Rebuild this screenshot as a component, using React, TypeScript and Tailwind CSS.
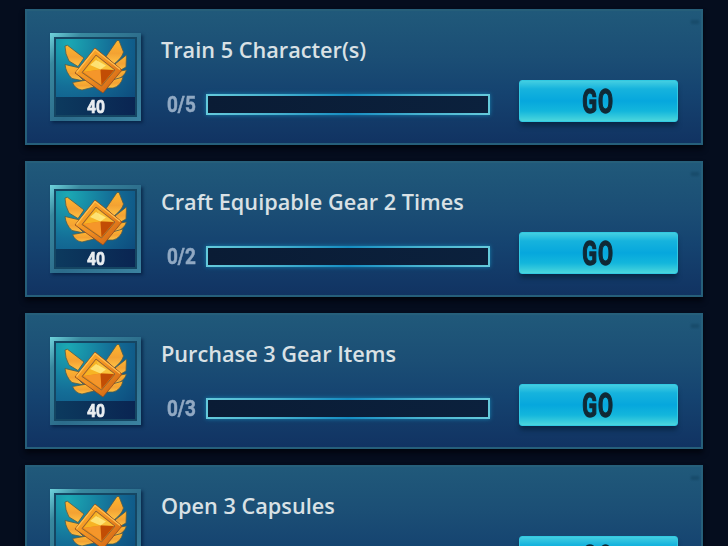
const QUESTS = [
  { title: 'Train 5 Character(s)', goal: 5, reward: 40 },
  { title: 'Craft Equipable Gear 2 Times', goal: 2, reward: 40 },
  { title: 'Purchase 3 Gear Items', goal: 3, reward: 40 },
  { title: 'Open 3 Capsules', goal: 3, reward: 40 },
];

type Quest = (typeof QUESTS)[number];

function Medal() {
  return (
    <svg viewBox="0 0 120 110" className="absolute left-0 top-0 h-[110px] w-[120px] -translate-x-[14px] -translate-y-[16px]">
      <defs>
        <linearGradient id="wing" x1="0" y1="0" x2="0" y2="1">
          <stop offset="0" stopColor="#ffb52e" />
          <stop offset="0.55" stopColor="#f3a233" />
          <stop offset="1" stopColor="#ffc345" />
        </linearGradient>
        <linearGradient id="frame" x1="0" y1="0" x2="1" y2="1">
          <stop offset="0" stopColor="#ffb32b" />
          <stop offset="0.5" stopColor="#f08f22" />
          <stop offset="1" stopColor="#c9580f" />
        </linearGradient>
      </defs>
      <g fill="url(#wing)" stroke="#4f5c4c" strokeWidth="0.8" strokeLinejoin="round">
        <path d="M25 26 L27.5 25.3 L44 38 L38 46.5 L29 41 Q25 34 25 26Z" />
        <path d="M25 44.5 L40 48 L36 53 L44 61 L32 58.5 Q26 53 25 44.5Z" />
        <path d="M32.5 62.5 L47 60 L54 67 L42 70 Q35 69 32.5 62.5Z" />
        <path d="M77 20.5 L79 20.5 L83.5 32 Q82 38 74 44 L66 36.5Z" />
        <path d="M86.5 35 L86 47 L79 51 L75 44Z" />
        <path d="M86.5 50 Q84.5 57 76 60 L73 57 L80 51Z" />
        <path d="M83 57 Q81 66 73 68 L65 68 L72 60Z" />
      </g>
      <path d="M55 28 L82 50 L63 73 L35 53Z" fill="url(#frame)" stroke="#8a4a22" strokeWidth="0.8" />
      <path d="M36.5 52.5 L55 29.5 L80 49.5" fill="none" stroke="#ffc050" strokeWidth="1.2" />
      <path d="M56 35 L75 50 L61.5 66 L42 52.5Z" fill="#e8860d" stroke="#8f6438" strokeWidth="1" />
      <path d="M56 36 L43.5 52 L60.5 49.5Z" fill="#f7b424" />
      <path d="M56 36 L74 50 L60.5 49.5Z" fill="#f9c23a" />
      <path d="M43.5 52 L60.5 49.5 L61.5 65Z" fill="#f5962a" />
      <path d="M60.5 49.5 L74 50 L61.5 65Z" fill="#c24d05" />
      <path d="M50 45 L56 40 L66 45.5 L60.5 49.5Z" fill="#fff08c" opacity="0.75" />
    </svg>
  );
}

function RewardTile({ amount }: { amount: number }) {
  return (
    <div className="h-[88px] w-[91px] shrink-0 bg-[linear-gradient(135deg,#6fd3dc_0%,#39899f_18%,#2c6c8b_55%,#3b83a0_100%)] p-1 shadow-[2px_2px_3px_rgba(4,28,60,0.7)]">
      <div className="relative flex h-full flex-col justify-end border-2 border-[#154663] bg-[radial-gradient(circle_at_15%_5%,#1ba9b4_0%,#146e97_45%,#0b4276_100%)]">
        <div className="flex h-[18px] items-center justify-center bg-[linear-gradient(90deg,#0c3a5e,#0a2552)]">
          <span className="relative z-10 block scale-x-[0.82] pt-px font-[Roboto,sans-serif] text-[19px] leading-none font-bold text-[#e9edf0] [-webkit-text-stroke:0.7px_#e9edf0]">
            {amount}
          </span>
        </div>
        <div className="absolute -top-[3px] -left-[2px]">
          <Medal />
        </div>
      </div>
    </div>
  );
}

function QuestCard({ quest }: { quest: Quest }) {
  return (
    <div className="relative flex h-[136px] shrink-0 items-start border-2 border-[#265f7a] bg-[linear-gradient(180deg,#20597a_0%,#1b4e75_35%,#154370_62%,#113362_100%)] pt-[22px] pl-[23px] shadow-[0_4px_5px_#02050e]">
      <span className="absolute top-[9px] right-[2px] h-1 w-2 bg-[#154765] opacity-70 blur-[1px]" />
      <RewardTile amount={quest.reward} />
      <div className="ml-[20px] w-[329px] shrink-0">
        <h2 className="mt-[3px] h-7 whitespace-nowrap font-['Open_Sans','Noto_Sans',sans-serif] text-[21.7px] leading-7 font-semibold text-[#d9e1e5]">
          {quest.title}
        </h2>
        <div className="mt-[30px] flex h-[21px] items-center">
          <div className="w-[45px] shrink-0 pt-px pl-[6px]">
            <span className="block w-max origin-left scale-x-[0.86] font-[Roboto,sans-serif] text-[22px] leading-none font-bold text-[#91a9c3] [-webkit-text-stroke:0.5px_#91a9c3]">
              0/{quest.goal}
            </span>
          </div>
          <div className="h-[21px] w-[284px] bg-[linear-gradient(90deg,#65cadb_0%,#47b2cf_25%,#168dc2_50%,#47b2cf_75%,#65cadb_100%)] p-[2px] shadow-[0_0_4px_#1581ae]">
            <div className="h-full bg-[linear-gradient(90deg,#0a1c35,#0b213d)]" />
          </div>
        </div>
      </div>
      <button className="mt-[47px] ml-[29px] flex h-[42px] w-[159px] shrink-0 items-center justify-center rounded-[3px] border border-[#32c9e2] bg-[linear-gradient(180deg,#43cee1_0%,#16b3dd_20%,#06a7dd_50%,#13b6dc_75%,#4bd6dc_100%)] shadow-[0_5px_5px_-1px_#092746]">
        <span className="block scale-x-[0.66] font-[Roboto,sans-serif] text-[33px] leading-none font-bold tracking-[1.5px] text-[#102935] [-webkit-text-stroke:1.4px_#102935]">
          GO
        </span>
      </button>
    </div>
  );
}

export default function App() {
  return (
    <main className="flex h-[546px] w-[728px] flex-col gap-4 overflow-hidden bg-[#050d1e] pt-[9px] pr-[25px] pl-[25px]">
      {QUESTS.map(quest => (
        <QuestCard key={quest.title} quest={quest} />
      ))}
    </main>
  );
}
